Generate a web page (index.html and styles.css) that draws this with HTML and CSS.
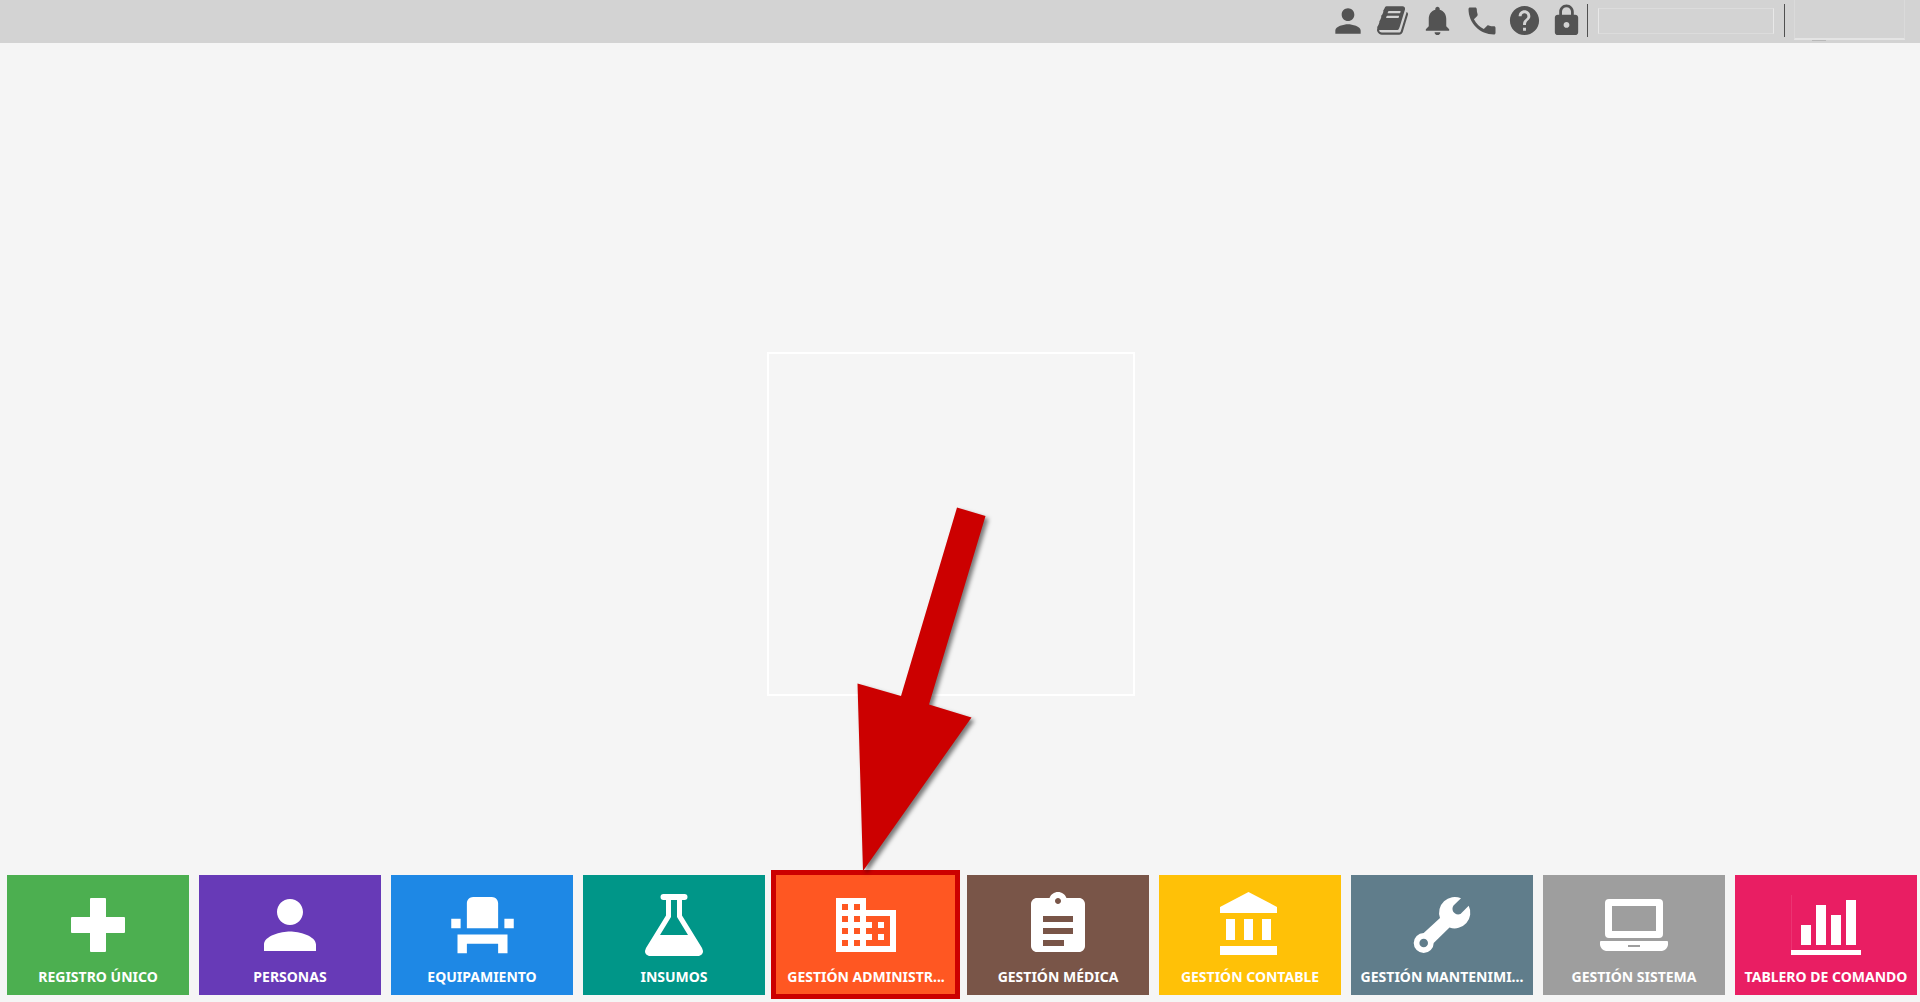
FILE: index.html
```html
<!DOCTYPE html>
<html lang="es">
<head>
<meta charset="UTF-8" />
<meta name="viewport" content="width=device-width, initial-scale=1" />
<title>Inicio</title>
<link rel="stylesheet" href="styles.css">
</head>
<body>
<header class="topbar">
  <button type="button" class="wide" aria-label="Usuario">
    <svg width="38" height="38" viewBox="0 0 24 24"><path d="M12 12c2.21 0 4-1.79 4-4s-1.79-4-4-4-4 1.79-4 4 1.79 4 4 4zm0 2c-2.67 0-8 1.34-8 4v2h16v-2c0-2.66-5.33-4-8-4z"/></svg>
  </button>
  <button type="button" class="wide" aria-label="Manual">
    <svg width="31" height="29" viewBox="0 128 1664 1536"><path d="M1639 478q40 57 18 129l-275 906q-19 64-76.5 107.5t-122.5 43.5h-923q-77 0-148.5-53.5t-99.5-131.5q-24-67-2-127 0-4 3-27t4-37q1-8-3-21.5t-3-19.5q2-11 8-21t16.5-23.5 16.5-23.5q23-38 45-91.5t30-91.5q3-10 .5-30t-.5-28q3-11 17-28t17-23q21-36 42-92t25-90q1-9-2.5-32t.5-28q4-13 22-30.5t22-22.5q19-26 42.5-84.5t27.5-96.5q1-8-3-25.5t-2-26.5q2-8 9-18t18-23 17-21q8-12 16.5-30.5t15-35 16-36 19.5-32 26.5-23.5 36-11.5 47.5 5.5l-1 3q38-9 51-9h761q74 0 114 56t18 130l-274 906q-36 119-71.5 153.5t-128.5 34.5h-869q-27 0-38 15-11 16-1 43 24 70 144 70h923q29 0 56-15.5t35-41.5l300-987q7-22 5-57 38 15 59 43zm-1064 2q-4 13 2 22.5t20 9.5h608q13 0 25.5-9.5t16.5-22.5l21-64q4-13-2-22.5t-20-9.5h-608q-13 0-25.5 9.5t-16.5 22.5zm-83 256q-4 13 2 22.5t20 9.5h608q13 0 25.5-9.5t16.5-22.5l21-64q4-13-2-22.5t-20-9.5h-608q-13 0-25.5 9.5t-16.5 22.5z"/></svg>
  </button>
  <button type="button" class="wide" aria-label="Notificaciones">
    <svg width="35" height="35" viewBox="0 0 24 24"><path d="M12 22c1.1 0 2-.9 2-2h-4c0 1.1.89 2 2 2zm6-6v-5c0-3.07-1.64-5.64-4.5-6.32V4c0-.83-.67-1.5-1.5-1.5s-1.5.67-1.5 1.5v.68C7.63 5.36 6 7.92 6 11v5l-2 2v1h16v-1l-2-2z"/></svg>
  </button>
  <button type="button" aria-label="Teléfono">
    <svg width="36" height="36" viewBox="0 0 24 24"><path d="M6.62 10.79c1.44 2.83 3.76 5.14 6.59 6.59l2.2-2.2c.27-.27.67-.36 1.02-.24 1.12.37 2.33.57 3.57.57.55 0 1 .45 1 1V20c0 .55-.45 1-1 1-9.39 0-17-7.61-17-17 0-.55.45-1 1-1h3.5c.55 0 1 .45 1 1 0 1.25.2 2.45.57 3.57.11.35.03.74-.25 1.02l-2.2 2.2z"/></svg>
  </button>
  <button type="button" aria-label="Ayuda">
    <svg width="35" height="35" viewBox="0 0 24 24"><path d="M12 2C6.48 2 2 6.48 2 12s4.48 10 10 10 10-4.48 10-10S17.52 2 12 2zm1 17h-2v-2h2v2zm2.07-7.75l-.9.92C13.45 12.9 13 13.5 13 15h-2v-.5c0-1.1.45-2.1 1.17-2.83l1.24-1.26c.37-.36.59-.86.59-1.41 0-1.1-.9-2-2-2s-2 .9-2 2H8c0-2.21 1.79-4 4-4s4 1.79 4 4c0 .88-.36 1.68-.93 2.25z"/></svg>
  </button>
  <button type="button" aria-label="Bloquear">
    <svg width="35" height="35" viewBox="0 0 24 24"><path d="M18 8h-1V6c0-2.76-2.24-5-5-5S7 3.24 7 6v2H6c-1.1 0-2 .9-2 2v10c0 1.1.9 2 2 2h12c1.1 0 2-.9 2-2V10c0-1.1-.9-2-2-2zm-6 9c-1.1 0-2-.9-2-2s.9-2 2-2 2 .9 2 2-.9 2-2 2zm3.1-9H8.9V6c0-1.71 1.39-3.1 3.1-3.1 1.71 0 3.1 1.39 3.1 3.1v2z"/></svg>
  </button>
  <span class="separator"></span>
  <div class="user-box"></div>
  <span class="separator"></span>
  <div class="logo-box"></div>
</header>

<main>
  <div class="placeholder"></div>
</main>

<nav class="tiles">
  <a href="#" class="tile green">
    <svg width="72" height="72" viewBox="0 0 72 72"><path d="M29 9h14q1 0 1 1v18h18q1 0 1 1v14q0 1-1 1H44v18q0 1-1 1H29q-1 0-1-1V44H10q-1 0-1-1V29q0-1 1-1h18V10q0-1 1-1z"/></svg>
    <span>REGISTRO ÚNICO</span>
  </a>
  <a href="#" class="tile purple">
    <svg width="78" height="78" viewBox="0 0 24 24"><path d="M12 12c2.21 0 4-1.79 4-4s-1.79-4-4-4-4 1.79-4 4 1.79 4 4 4zm0 2c-2.67 0-8 1.34-8 4v2h16v-2c0-2.66-5.33-4-8-4z"/></svg>
    <span>PERSONAS</span>
  </a>
  <a href="#" class="tile blue">
    <svg width="75" height="75" viewBox="0 0 24 24"><path d="M4 18v3h3v-3h10v3h3v-6H4zm15-8h3v3h-3zM2 10h3v3H2zm15 3H7V5c0-1.1.9-2 2-2h6c1.1 0 2 .9 2 2v8z"/></svg>
    <span>EQUIPAMIENTO</span>
  </a>
  <a href="#" class="tile teal">
    <svg width="72" height="72" viewBox="0 0 72 72"><path fill-rule="evenodd" d="M25.500 5h21a3 3 0 0 1 0 6H44v15.500L64 59q3 6-3 8H11q-6-2-3-8L28 26.500V11h-2.500a3 3 0 0 1 0-6zM33 11v17L22 46h28L39 28V11z"/></svg>
    <span>INSUMOS</span>
  </a>
  <div class="highlighted">
    <a href="#" class="tile orange">
      <svg width="72" height="72" viewBox="0 0 24 24"><path d="M12 7V3H2v18h20V7H12zM6 19H4v-2h2v2zm0-4H4v-2h2v2zm0-4H4V9h2v2zm0-4H4V5h2v2zm4 12H8v-2h2v2zm0-4H8v-2h2v2zm0-4H8V9h2v2zm0-4H8V5h2v2zm10 12h-8v-2h2v-2h-2v-2h2v-2h-2V9h8v10zm-2-8h-2v2h2v-2zm0 4h-2v2h2v-2z"/></svg>
      <span>GESTIÓN ADMINISTR...</span>
    </a>
    <svg class="arrow" width="150" height="380" viewBox="0 0 150 380"><path d="M107 7.500L135.500 16 79 204.500 121.500 217.500 13 371 7.500 183.500 51 196z"/></svg>
  </div>
  <a href="#" class="tile brown">
    <svg width="72" height="72" viewBox="0 0 24 24"><path d="M19 3h-4.180C14.400 1.840 13.300 1 12 1c-1.300 0-2.400.84-2.820 2H5c-1.100 0-2 .9-2 2v14c0 1.100.9 2 2 2h14c1.100 0 2-.9 2-2V5c0-1.100-.9-2-2-2zm-7 0c.55 0 1 .45 1 1s-.45 1-1 1-1-.45-1-1 .45-1 1-1zm2 16H7v-2h7v2zm3-4H7v-2h10v2zm0-4H7V9h10v2z"/></svg>
    <span>GESTIÓN MÉDICA</span>
  </a>
  <a href="#" class="tile yellow">
    <svg width="72" height="72" viewBox="0 0 24 24"><path d="M4 10v7h3v-7H4zm6 0v7h3v-7h-3zM2 22h19v-3H2v3zm14-12v7h3v-7h-3zM11.500 1L2 6v2h19V6l-9.500-5z"/></svg>
    <span>GESTIÓN CONTABLE</span>
  </a>
  <a href="#" class="tile slate">
    <svg width="72" height="72" viewBox="0 0 72 72"><path fill-rule="evenodd" d="M34 29A15.700 15.700 0 0 1 55 9.300L47.500 16.500C44.500 21 48.500 27 54.500 25L62.700 16.700A15.700 15.700 0 0 1 43.500 38.500L27.700 54A10 10 0 1 1 17.700 44zM22 54a4.300 4.300 0 1 0-8.600 0 4.300 4.300 0 1 0 8.600 0z"/></svg>
    <span>GESTIÓN MANTENIMI...</span>
  </a>
  <a href="#" class="tile gray">
    <svg width="72" height="72" viewBox="0 0 72 72"><path fill-rule="evenodd" d="M11 10h50q4 0 4 4v31q0 4-4 4H11q-4 0-4-4V14q0-4 4-4zm3 7v25h44V17zM3 52h66q1 0 1 1v3q-1 5-6 6H8q-5-1-6-6v-3q0-1 1-1zm27 4v2h12v-2z"/></svg>
    <span>GESTIÓN SISTEMA</span>
  </a>
  <a href="#" class="tile pink">
    <svg width="72" height="72" viewBox="0 0 72 72"><path d="M11 36h10v20H11zM26 16h10v40H26zM41 26h10v30H41zM56 11h10v45H56zM1 61h70v5H1z"/><path opacity=".1" d="M1 6h1v55H1z"/></svg>
    <span>TABLERO DE COMANDO</span>
  </a>
</nav>
</body>
</html>
```

FILE: styles.css
```css
* {
  box-sizing: border-box;
}
body {
  margin: 0;
  min-height: 100vh;
  display: flex;
  flex-direction: column;
  background: #f5f5f5;
  font-family: 'Noto Sans', Tahoma, Verdana, sans-serif;
}

/* Top bar */
.topbar {
  height: 43px;
  background: #d3d3d3;
  display: flex;
  justify-content: flex-end;
  align-items: center;
  padding: 0 15px 2px 0;
}
.topbar button {
  width: 43px;
  height: 41px;
  padding: 0;
  border: none;
  background: none;
  display: flex;
  align-items: center;
  justify-content: center;
  cursor: pointer;
}
.topbar button.wide {
  width: 45px;
}
.topbar svg {
  fill: #535353;
}
.separator {
  width: 1px;
  height: 33px;
  background: #505050;
}
.topbar button:last-of-type {
  width: 41px;
}
.user-box {
  width: 176px;
  height: 26px;
  margin: 0 10px;
  border: 1px solid #dcdcdc;
  border-left-color: #e8e8e8;
  border-right-color: #e8e8e8;
}
.logo-box {
  position: relative;
  width: 111px;
  height: 40px;
  margin-left: 9px;
  align-self: flex-start;
  border: 1px solid #dadada;
  border-top: none;
  border-bottom: 2px solid #e4e4e4;
}
.logo-box::after {
  content: '';
  position: absolute;
  left: 17px;
  bottom: -3px;
  width: 14px;
  height: 1px;
  background: #b8b8b8;
}

/* Content */
main {
  flex: 1;
  display: flex;
  align-items: center;
  justify-content: center;
  padding: 130px 18px 0 0;
}
.placeholder {
  width: 368px;
  height: 344px;
  border: 2px solid #fff;
}

/* Bottom menu */
.tiles {
  display: grid;
  grid-template-columns: repeat(10, minmax(0, 1fr));
  gap: 10px;
  padding: 0 3px 7px 7px;
}
.tile {
  height: 120px;
  padding-top: 8px;
  display: flex;
  flex-direction: column;
  align-items: center;
  color: #fff;
  text-decoration: none;
}
.tile svg {
  flex: 1;
  min-height: 0;
  overflow: visible;
  fill: #fff;
}
.tile span {
  height: 20px;
  margin-bottom: 8px;
  font-size: 14px;
  font-weight: 700;
  line-height: 20px;
  white-space: nowrap;
}
.green { background: #4caf50; }
.purple { background: #673ab7; }
.blue { background: #1e88e5; }
.teal { background: #009688; }
.orange { background: #ff5722; }
.brown { background: #795548; }
.yellow { background: #ffc107; }
.slate { background: #607d8b; }
.gray { background: #9e9e9e; }
.pink { background: #e91e63; }

/* Marked tile with its arrow */
.highlighted {
  position: relative;
}
.highlighted::after {
  content: '';
  position: absolute;
  top: -5px;
  right: -3px;
  bottom: -4px;
  left: -4px;
  border: 5px solid #c00;
  pointer-events: none;
}
.arrow {
  position: absolute;
  top: -375px;
  left: 75px;
  z-index: 1;
  fill: #c00;
  filter: drop-shadow(3px 3px 2px rgba(0, 0, 0, 0.5));
  pointer-events: none;
}
```
